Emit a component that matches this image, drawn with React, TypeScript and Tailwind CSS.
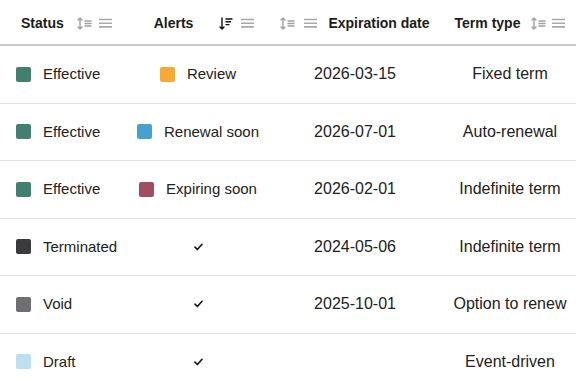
import type { ReactNode } from 'react';

type Row = {
  status: string;
  statusColor: string;
  alert: string | null;
  alertColor?: string;
  date: string;
  term: string;
};

const rows: Row[] = [
  { status: 'Effective', statusColor: 'bg-[#41806f]', alert: 'Review', alertColor: 'bg-[#f6a935]', date: '2026-03-15', term: 'Fixed term' },
  { status: 'Effective', statusColor: 'bg-[#41806f]', alert: 'Renewal soon', alertColor: 'bg-[#46a1d3]', date: '2026-07-01', term: 'Auto-renewal' },
  { status: 'Effective', statusColor: 'bg-[#41806f]', alert: 'Expiring soon', alertColor: 'bg-[#a14c60]', date: '2026-02-01', term: 'Indefinite term' },
  { status: 'Terminated', statusColor: 'bg-[#3a3a3c]', alert: null, date: '2024-05-06', term: 'Indefinite term' },
  { status: 'Void', statusColor: 'bg-[#6f6f71]', alert: null, date: '2025-10-01', term: 'Option to renew' },
  { status: 'Draft', statusColor: 'bg-[#bde0f0]', alert: null, date: '', term: 'Event-driven' },
];

function SortIcon() {
  return (
    <svg width="15" height="13" viewBox="0 0 15 13" fill="none" stroke="#a0a0a0" strokeWidth="1.4" strokeLinecap="round" strokeLinejoin="round">
      <path d="M3 1v11M1 3l2-2 2 2M1 10l2 2 2-2" />
      <path d="M8 4h6M8 6.5h6M8 9h6" />
    </svg>
  );
}

function SortDescIcon() {
  return (
    <svg width="14" height="13" viewBox="0 0 14 13" fill="none" stroke="#111" strokeWidth="1.4" strokeLinecap="round" strokeLinejoin="round">
      <path d="M3 1v11M1 10l2 2 2-2" />
      <path d="M7 2h6M7 4.8h4.5M7 7.6h3" />
    </svg>
  );
}

function MenuIcon() {
  return (
    <svg width="13" height="12" viewBox="0 0 13 12" fill="none" stroke="#a8a8a8" strokeWidth="1.6">
      <path d="M0 2.5h13M0 6.2h13M0 9.9h13" />
    </svg>
  );
}

function Swatch({ color }: { color: string }) {
  return <span className={`block h-[15px] w-[15px] shrink-0 rounded-[2px] ${color}`} />;
}

function Cell({ children, className }: { children: ReactNode; className: string }) {
  return <div className={`flex items-center ${className}`}>{children}</div>;
}

export default function App() {
  return (
    <div className="h-[384px] w-[576px] overflow-hidden bg-white font-['Liberation_Sans',Arial,sans-serif] text-[#222]">
      <div className="grid h-[46px] grid-cols-[130px_140px_170px_136px] border-b-2 border-[#c9c9c9] pt-[2px] text-[14px] font-bold text-[#1c1c1c]">
        <Cell className="pl-[21px]">
          <span>Status</span>
          <span className="ml-[13px] flex"><SortIcon /></span>
          <span className="ml-[7px] flex"><MenuIcon /></span>
        </Cell>
        <Cell className="justify-center pl-[8px]">
          <span>Alerts</span>
          <span className="ml-[26px] flex"><SortDescIcon /></span>
          <span className="ml-[8px] flex"><MenuIcon /></span>
        </Cell>
        <Cell className="justify-center">
          <span className="flex"><SortIcon /></span>
          <span className="ml-[9px] flex"><MenuIcon /></span>
          <span className="ml-[11px]">Expiration date</span>
        </Cell>
        <Cell className="justify-center pl-[4px]">
          <span>Term type</span>
          <span className="ml-[11px] flex"><SortIcon /></span>
          <span className="ml-[6px] flex"><MenuIcon /></span>
        </Cell>
      </div>
      {rows.map((row, i) => (
        <div
          key={i}
          className="grid h-[57.5px] grid-cols-[130px_140px_170px_136px] border-b border-[#e0e0e0]"
        >
          <Cell className="gap-[12px] pl-[16px] text-[15px]">
            <Swatch color={row.statusColor} />
            <span>{row.status}</span>
          </Cell>
          <Cell className="justify-center gap-[12px] pr-[4px] text-[15px]">
            {row.alert ? (
              <>
                <Swatch color={row.alertColor ?? ''} />
                <span>{row.alert}</span>
              </>
            ) : (
              <svg width="9" height="8" viewBox="0 0 9 8" fill="none" stroke="#1a1a1a" strokeWidth="1.7" strokeLinecap="round" strokeLinejoin="round">
                <path d="M1 4.2l2.4 2.3L8 1.3" />
              </svg>
            )}
          </Cell>
          <Cell className="justify-center text-[16px]">{row.date}</Cell>
          <Cell className="justify-center pl-[4px] text-[16px]">{row.term}</Cell>
        </div>
      ))}
    </div>
  );
}
